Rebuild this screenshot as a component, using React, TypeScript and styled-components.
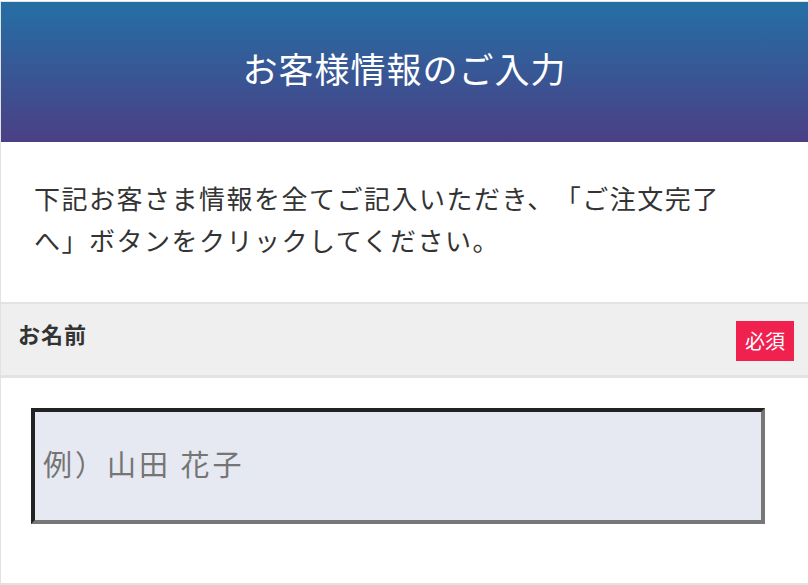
import React from "react";
import styled, { createGlobalStyle } from "styled-components";

const GlobalStyle = createGlobalStyle`
  html, body {
    margin: 0;
    padding: 0;
    background: #ffffff;
    overflow: hidden;
  }
  body {
    font-family: "Noto Sans CJK JP", "Noto Sans", sans-serif;
    color: #333333;
    text-spacing-trim: space-all;
  }
  * { box-sizing: border-box; }
`;

const Card = styled.div`
  width: 812px;
  margin-top: 1px;
  border: 1px solid #e2e2e2;
  border-bottom-width: 2px;
  background: #ffffff;
`;

const Header = styled.header`
  height: 140px;
  display: flex;
  align-items: center;
  justify-content: center;
  padding-bottom: 10px;
  width: 807px;
  background: linear-gradient(180deg, #246fa5 0%, #4b3f85 100%);
`;

const Title = styled.h1`
  margin: 0;
  font-size: 35px;
  font-weight: 400;
  letter-spacing: 1px;
  color: #ffffff;
  line-height: 1;
`;

const Intro = styled.p`
  margin: 0;
  padding: 35px 0 41px 33px;
  width: 740px;
  font-size: 26px;
  letter-spacing: 1.5px;
  line-height: 42px;
  color: #333333;
  text-spacing-trim: space-all;
`;

const FieldHead = styled.div`
  display: flex;
  justify-content: space-between;
  align-items: center;
  width: 807px;
  height: 76px;
  padding: 0 14px 0 17px;
  background: #efefef;
  border-top: 2px solid #e3e3e3;
  border-bottom: 3px solid #e3e3e3;
`;

const FieldLabel = styled.span`
  align-self: flex-start;
  padding-top: 14px;
  font-size: 22px;
  font-weight: 700;
  letter-spacing: 1px;
  line-height: 30px;
  color: #333333;
`;

const Badge = styled.span<{ $tone?: string }>`
  display: flex;
  align-items: center;
  justify-content: center;
  width: 58px;
  height: 40px;
  margin-top: 2px;
  background: ${(p) => p.$tone ?? "#f0214f"};
  color: #ffffff;
  font-size: 20px;
  letter-spacing: 0;
`;

const FieldBody = styled.div`
  padding: 30px 0 59px 30px;
`;

const TextInput = styled.input`
  display: block;
  width: 734px;
  height: 116px;
  padding: 0 0 6px 8px;
  border-style: solid;
  border-width: 4px;
  border-color: #222222 #777777 #777777 #222222;
  background: #e6e9f1;
  font-family: "Noto Sans CJK JP", "Noto Sans", sans-serif;
  font-size: 29px;
  letter-spacing: 3px;
  color: #333333;
  outline: none;
  &::placeholder {
    color: #757575;
  }
`;

export default function App() {
  return (
    <>
      <GlobalStyle />
      <Card>
        <Header>
          <Title>お客様情報のご入力</Title>
        </Header>
        <Intro>
          下記お客さま情報を全てご記入いただき、「ご注文完了へ」ボタンをクリックしてください。
        </Intro>
        <FieldHead>
          <FieldLabel>お名前</FieldLabel>
          <Badge>必須</Badge>
        </FieldHead>
        <FieldBody>
          <TextInput type="text" placeholder="例）山田 花子" />
        </FieldBody>
      </Card>
    </>
  );
}
